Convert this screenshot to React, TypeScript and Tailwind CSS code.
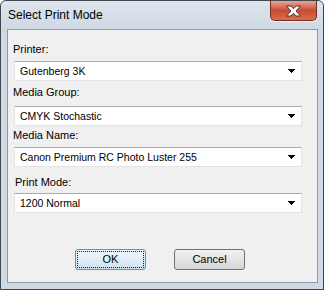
import React from "react";

function Arrow() {
  return (
    <svg width="8" height="5" viewBox="0 0 8 5" className="block">
      <path d="M0 0H7V1H6V2H5V3H4V4H3V3H2V2H1V1H0Z" fill="#000" />
    </svg>
  );
}

function Combo({ value }: { value: string }) {
  return (
    <div className="ml-[6px] w-[288px] h-[20px] bg-white border border-[#e2e3e4] border-t-[#ababab] flex items-center justify-between pl-[5px] pr-[5px]">
      <span className="text-[10.5px] text-black leading-none pt-[1px]">{value}</span>
      <Arrow />
    </div>
  );
}

function Label({ text, className }: { text: string; className: string }) {
  return <div className={"h-[13px] text-[11px] leading-[13px] text-black " + className}>{text}</div>;
}

function CloseButton() {
  return (
    <div className="w-[47px] h-[20px] rounded-b-[5px] border border-t-0 border-[#7a2a1e] bg-gradient-to-b from-[#e8a595] via-[#c74a33] to-[#d6704f] flex items-center justify-center shadow-[0_1px_0_rgba(255,255,255,0.6)]">
      <svg width="17" height="12" viewBox="0 0 17 12">
        <path
          d="M1.5 1 L6 1 L8.5 3.8 L11 1 L15.5 1 L11 6 L15.5 11 L11 11 L8.5 8.2 L6 11 L1.5 11 L6 6 Z"
          fill="#fff"
          stroke="#4a3530"
          strokeWidth="1"
          strokeLinejoin="round"
        />
      </svg>
    </div>
  );
}

export default function App() {
  return (
    <div
      className="w-[324px] h-[290px] bg-[#cfd9e4] border border-[#3f464e] rounded-t-[6px] flex flex-col"
      style={{ fontFamily: '"Liberation Sans", Arial, sans-serif' }}
    >
      {/* Title bar */}
      <div className="h-[28px] flex items-start justify-between bg-gradient-to-b from-[#dde4ec] to-[#cfd9e4] rounded-t-[6px]">
        <span className="text-[12px] text-black pl-[7px] pt-[5px]">Select Print Mode</span>
        <div className="mr-[6px]">
          <CloseButton />
        </div>
      </div>

      {/* Client area */}
      <div className="ml-[6px] mr-[5px] mb-[6px] flex-1 border border-[#8d99a6] bg-[#f0f0f0] flex flex-col">
        <Label text="Printer:" className="mt-[13px] pl-[5px]" />
        <div className="mt-[5px]">
          <Combo value="Gutenberg 3K" />
        </div>
        <Label text="Media Group:" className="mt-[5px] pl-[5px]" />
        <div className="mt-[7px]">
          <Combo value="CMYK Stochastic" />
        </div>
        <Label text="Media Name:" className="mt-[3px] pl-[5px]" />
        <div className="mt-[5px]">
          <Combo value="Canon Premium RC Photo Luster 255" />
        </div>
        <Label text="Print Mode:" className="mt-[9px] pl-[7px]" />
        <div className="mt-[4px]">
          <Combo value="1200 Normal" />
        </div>

        <div className="mt-[36px] flex gap-[28px] pl-[67px]">
          <div className="w-[71px] h-[21px] rounded-[3px] border border-[#3c9fd8] bg-gradient-to-b from-[#f0f7fc] to-[#cfe3ef] p-[1px]">
            <div className="w-full h-full border border-dotted border-[#1a1a1a] rounded-[1px] flex items-center justify-center text-[11px] text-black">
              OK
            </div>
          </div>
          <div className="w-[71px] h-[21px] rounded-[3px] border border-[#707070] bg-gradient-to-b from-[#f2f2f2] to-[#d6d6d6] flex items-center justify-center text-[11px] text-black">
            Cancel
          </div>
        </div>
      </div>
    </div>
  );
}
